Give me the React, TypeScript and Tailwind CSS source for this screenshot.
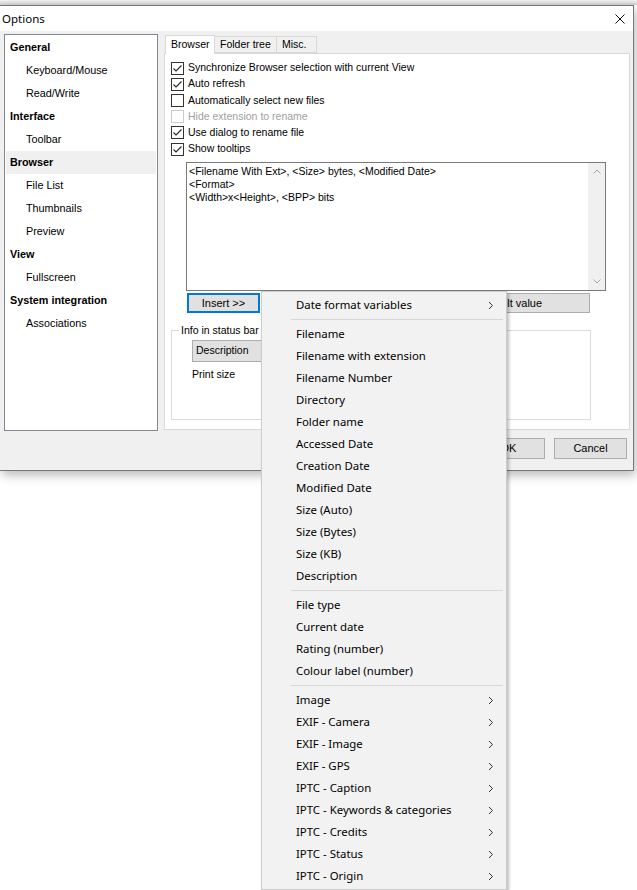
import React from "react";

const tree: { label: string; bold?: boolean; selected?: boolean }[] = [
  { label: "General", bold: true },
  { label: "Keyboard/Mouse" },
  { label: "Read/Write" },
  { label: "Interface", bold: true },
  { label: "Toolbar" },
  { label: "Browser", bold: true, selected: true },
  { label: "File List" },
  { label: "Thumbnails" },
  { label: "Preview" },
  { label: "View", bold: true },
  { label: "Fullscreen" },
  { label: "System integration", bold: true },
  { label: "Associations" },
];

const checks = [
  { label: "Synchronize Browser selection with current View", checked: true },
  { label: "Auto refresh", checked: true },
  { label: "Automatically select new files", checked: false },
  { label: "Hide extension to rename", checked: false, disabled: true },
  { label: "Use dialog to rename file", checked: true },
  { label: "Show tooltips", checked: true },
];

type MenuEntry = { label: string; sub?: boolean } | "sep";

const menu: MenuEntry[] = [
  { label: "Date format variables", sub: true },
  "sep",
  { label: "Filename" },
  { label: "Filename with extension" },
  { label: "Filename Number" },
  { label: "Directory" },
  { label: "Folder name" },
  { label: "Accessed Date" },
  { label: "Creation Date" },
  { label: "Modified Date" },
  { label: "Size (Auto)" },
  { label: "Size (Bytes)" },
  { label: "Size (KB)" },
  { label: "Description" },
  "sep",
  { label: "File type" },
  { label: "Current date" },
  { label: "Rating (number)" },
  { label: "Colour label (number)" },
  "sep",
  { label: "Image", sub: true },
  { label: "EXIF - Camera", sub: true },
  { label: "EXIF - Image", sub: true },
  { label: "EXIF - GPS", sub: true },
  { label: "IPTC - Caption", sub: true },
  { label: "IPTC - Keywords & categories", sub: true },
  { label: "IPTC - Credits", sub: true },
  { label: "IPTC - Status", sub: true },
  { label: "IPTC - Origin", sub: true },
];

function CheckBox({ checked, disabled }: { checked: boolean; disabled?: boolean }) {
  return (
    <span
      className={`w-[13px] h-[13px] shrink-0 border bg-white flex items-center justify-center ${
        disabled ? "border-[#cccccc]" : "border-[#333333]"
      }`}
    >
      {checked && (
        <svg width="11" height="11" viewBox="0 0 11 11">
          <polyline points="1.5,5.5 4,8 9.5,2.5" fill="none" stroke="#222" strokeWidth="1.1" />
        </svg>
      )}
    </span>
  );
}

function Chevron() {
  return (
    <svg width="6" height="9" viewBox="0 0 6 9">
      <polyline points="1,1 4.5,4.5 1,8" fill="none" stroke="#333" strokeWidth="1" />
    </svg>
  );
}

export default function App() {
  return (
    <div className="relative w-[637px] h-[890px] overflow-hidden bg-white text-black font-['Liberation_Sans',Arial,sans-serif]">
      {/* shadow strip above the window */}
      <div className="h-[5px] bg-gradient-to-b from-[#f3f3f3] to-[#d2d2d2]" />

      {/* Options dialog */}
      <div className="w-[634px] border-t border-r border-b border-[#777777] bg-[#f0f0f0] shadow-[2px_4px_10px_rgba(0,0,0,0.28)]">
        <div className="h-[25px] bg-white flex items-center justify-between pl-[2px] pr-[8px]">
          <span className="font-['Noto_Sans',sans-serif] text-[11.5px]">Options</span>
          <svg width="10" height="10" viewBox="0 0 10 10">
            <path d="M0.5 0.5 L9.5 9.5 M9.5 0.5 L0.5 9.5" stroke="#111" strokeWidth="1" />
          </svg>
        </div>

        <div className="pt-[3px] pl-[4px] pb-[11px]">
          <div className="flex">
            {/* tree */}
            <div className="w-[154px] h-[397px] bg-white border border-[#828790] pt-[1px] text-[10.8px]">
              {tree.map((t) => (
                <div
                  key={t.label}
                  className={`h-[23px] mx-[1px] flex items-center ${t.bold ? "pl-[4px] font-bold" : "pl-[20px]"} ${
                    t.selected ? "bg-[#f0f0f0]" : ""
                  }`}
                >
                  {t.label}
                </div>
              ))}
            </div>

            {/* tabs */}
            <div className="ml-[6px] w-[466px]">
              <div className="h-[19px] flex items-end pl-[1px] text-[10.5px]">
                <div className="w-[50px] h-[19px] -mb-px relative z-10 bg-white border border-b-0 border-[#d9d9d9] pl-[5px] flex items-center">
                  Browser
                </div>
                <div className="w-[62px] h-[17px] bg-[#f0f0f0] border border-l-0 border-[#d9d9d9] pl-[5px] flex items-center">
                  Folder tree
                </div>
                <div className="w-[40px] h-[17px] bg-[#f0f0f0] border border-l-0 border-[#d9d9d9] pl-[5px] flex items-center">
                  Misc.
                </div>
              </div>

              <div className="h-[377px] bg-white border border-[#d9d9d9] pt-[6px] text-[10.5px]">
                <div className="pl-[6px]">
                  {checks.map((c) => (
                    <div key={c.label} className="h-[16.2px] flex items-center gap-[4px]">
                      <CheckBox checked={c.checked} disabled={c.disabled} />
                      <span className={c.disabled ? "text-[#a0a0a0]" : ""}>{c.label}</span>
                    </div>
                  ))}
                </div>

                <div className="mt-[5px] ml-[21px] w-[420px] h-[129px] border border-[#7a7a7a] flex">
                  <div className="flex-1 pl-[2px] pt-[2px] leading-[13px]">
                    <div>&lt;Filename With Ext&gt;, &lt;Size&gt; bytes, &lt;Modified Date&gt;</div>
                    <div>&lt;Format&gt;</div>
                    <div>&lt;Width&gt;x&lt;Height&gt;, &lt;BPP&gt; bits</div>
                  </div>
                  <div className="w-[17px] bg-[#f0f0f0] flex flex-col items-center justify-between py-[6px]">
                    <svg width="8" height="5" viewBox="0 0 8 5">
                      <polyline points="0.5,4.5 4,1 7.5,4.5" fill="none" stroke="#a6a6a6" strokeWidth="1" />
                    </svg>
                    <svg width="8" height="5" viewBox="0 0 8 5">
                      <polyline points="0.5,0.5 4,4 7.5,0.5" fill="none" stroke="#a6a6a6" strokeWidth="1" />
                    </svg>
                  </div>
                </div>

                <div className="mt-[2px] ml-[22px] w-[403px] flex justify-between text-[11px]">
                  <button className="w-[73px] h-[20px] bg-[#e1e1e1] border-2 border-[#0078d7] flex items-center justify-center">
                    Insert &gt;&gt;
                  </button>
                  <button className="w-[160px] h-[20px] bg-[#e1e1e1] border border-[#adadad] flex items-center justify-center">
                    Default value
                  </button>
                </div>

                <fieldset className="mt-[11px] ml-[6px] w-[420px] h-[96px] border border-[#dcdcdc]">
                  <legend className="ml-[7px] px-[2px] leading-[13px]">Info in status bar</legend>
                  <div className="mt-[3px] ml-[20px] w-[220px] h-[22px] bg-[#e1e1e1] border border-[#adadad] flex items-center pl-[3px]">
                    Description
                  </div>
                  <div className="mt-[6px] ml-[20px] leading-[13px]">Print size</div>
                </fieldset>
              </div>
            </div>
          </div>

          <div className="mt-[7px] pr-[6px] flex justify-end gap-[9px] text-[11px]">
            <button className="w-[73px] h-[21px] bg-[#e1e1e1] border border-[#adadad] flex items-center justify-center">
              OK
            </button>
            <button className="w-[73px] h-[21px] bg-[#e1e1e1] border border-[#adadad] flex items-center justify-center">
              Cancel
            </button>
          </div>
        </div>
      </div>

      {/* popup menu from Insert >> */}
      <div className="absolute left-[261px] top-[291px] w-[246px] bg-[#f2f2f2] border border-[#cccccc] py-[2px] shadow-[2px_2px_3px_rgba(0,0,0,0.25)] font-['Noto_Sans',sans-serif] text-[11.4px]">
        {menu.map((m, i) =>
          m === "sep" ? (
            <div key={i} className="h-[7px] flex items-center ml-[29px] mr-[3px]">
              <div className="h-px w-full bg-[#d7d7d7]" />
            </div>
          ) : (
            <div key={i} className="h-[22px] flex items-center justify-between pl-[34px] pr-[12px]">
              <span>{m.label}</span>
              {m.sub && <Chevron />}
            </div>
          )
        )}
      </div>
    </div>
  );
}
